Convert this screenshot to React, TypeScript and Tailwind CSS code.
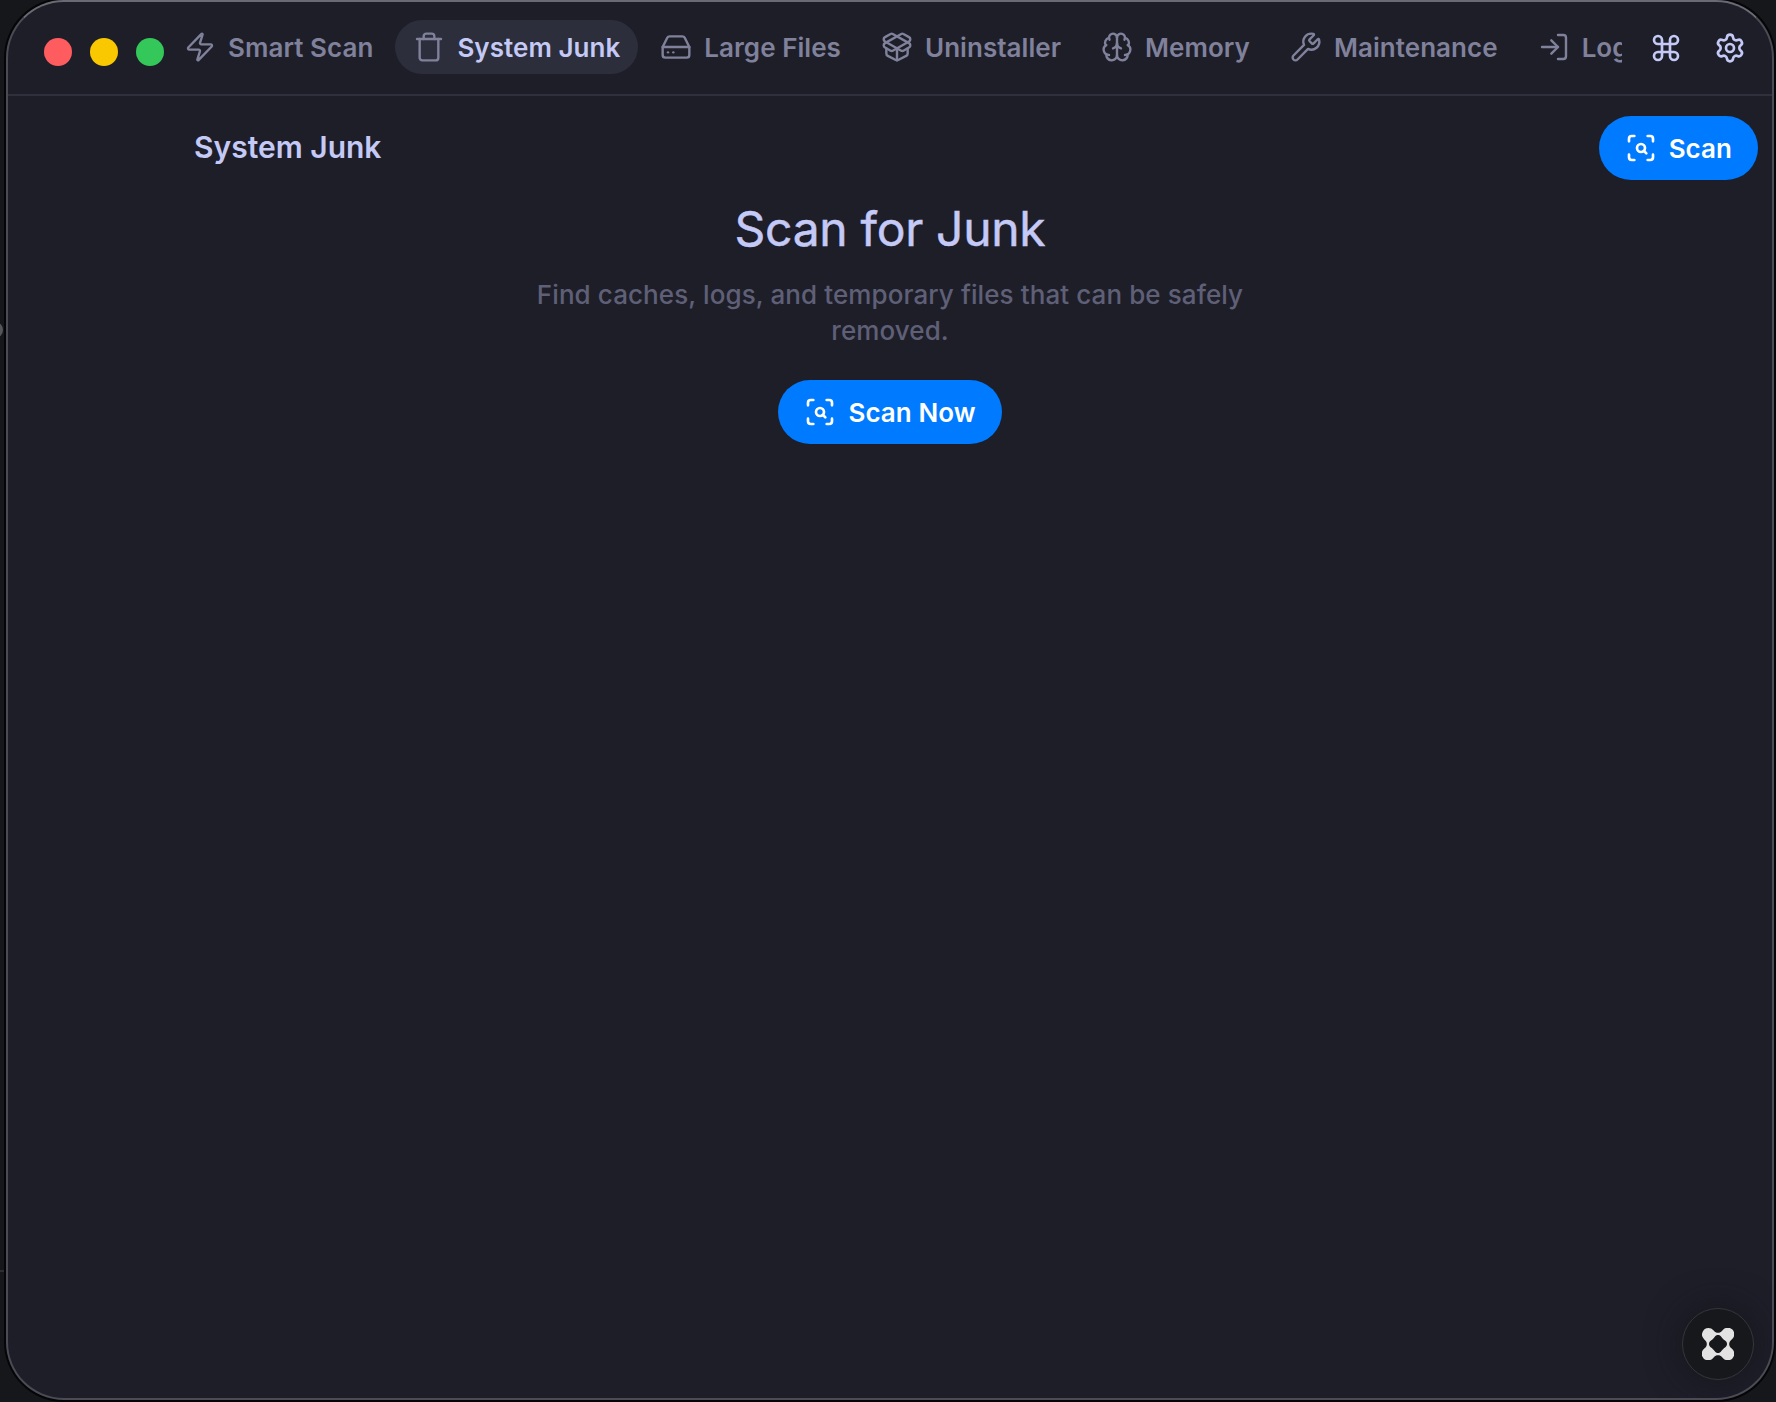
import type { ReactNode } from "react";
import {
  Brain,
  Command,
  HardDrive,
  LogIn,
  PackageOpen,
  ScanSearch,
  Settings,
  Trash,
  Wrench,
  Zap,
  type LucideIcon,
} from "lucide-react";

type Tab = { label: string; icon: LucideIcon; active?: boolean };

const tabs: Tab[] = [
  { label: "Smart Scan", icon: Zap },
  { label: "System Junk", icon: Trash, active: true },
  { label: "Large Files", icon: HardDrive },
  { label: "Uninstaller", icon: PackageOpen },
  { label: "Memory", icon: Brain },
  { label: "Maintenance", icon: Wrench },
  { label: "Login Items", icon: LogIn },
];

function TrafficLights() {
  return (
    <div className="mt-2.5 flex shrink-0 gap-[18px]">
      <span className="size-7 rounded-full bg-[#ff5c60]" />
      <span className="size-7 rounded-full bg-[#fac800]" />
      <span className="size-7 rounded-full bg-[#34c759]" />
    </div>
  );
}

function TabButton({ label, icon: Icon, active }: Tab) {
  return (
    <button
      className={`flex h-[54px] shrink-0 items-center gap-3 rounded-full px-[18px] text-[26px] font-semibold whitespace-nowrap tracking-[0.045px] ${
        active ? "bg-[#2d2e3b] text-[#c4c9f5]" : "text-[#80819b]"
      }`}
    >
      <Icon className="shrink-0 text-[#80819b]" size={32} strokeWidth={1.8} />
      <span>{label}</span>
    </button>
  );
}

function ScanButton({ children }: { children: ReactNode }) {
  return (
    <button className="flex h-16 items-center gap-3 rounded-full bg-[#007aff] px-[26px] text-[26px] font-semibold whitespace-nowrap tracking-[0.05px] text-white">
      <ScanSearch size={32} strokeWidth={2} />
      <span>{children}</span>
    </button>
  );
}

function AssistantButton() {
  return (
    <button
      aria-label="Assistant"
      className="absolute right-[18px] bottom-[18px] flex size-[72px] items-center justify-center rounded-full border border-[#35363d] bg-[#17181b] shadow-[0_0_30px_6px_rgba(20,20,26,0.55)]"
    >
      <svg width="32" height="32" viewBox="0 0 32 32" fill="#e2e2e3">
        <path
          fillRule="evenodd"
          d="M6.5 0A6.5 6.5 0 0 1 11.4 2.3C13 4.3 14.4 4.8 16 4.8C17.6 4.8 19 4.3 20.6 2.3A6.5 6.5 0 1 1 29.7 11.4C27.7 13 27.2 14.4 27.2 16C27.2 17.6 27.7 19 29.7 20.6A6.5 6.5 0 1 1 20.6 29.7C19 27.7 17.6 27.2 16 27.2C14.4 27.2 13 27.7 11.4 29.7A6.5 6.5 0 1 1 2.3 20.6C4.3 19 4.8 17.6 4.8 16C4.8 14.4 4.3 13 2.3 11.4A6.5 6.5 0 0 1 6.5 0ZM16 7C14.6 7 13.6 7.6 12.6 9C11.4 10.6 10.6 11.4 9 12.6C7.6 13.6 7 14.6 7 16C7 17.4 7.6 18.4 9 19.4C10.6 20.6 11.4 21.4 12.6 23C13.6 24.4 14.6 25 16 25C17.4 25 18.4 24.4 19.4 23C20.6 21.4 21.4 20.6 23 19.4C24.4 18.4 25 17.4 25 16C25 14.6 24.4 13.6 23 12.6C21.4 11.4 20.6 10.6 19.4 9C18.4 7.6 17.4 7 16 7Z"
        />
      </svg>
    </button>
  );
}

export default function App() {
  return (
    <div className="relative h-[1402px] w-[1776px] overflow-hidden bg-[#15171a] pr-0.5 pb-0.5 pl-1.5 font-['Inter',sans-serif]">
      <div className="absolute top-[322px] -left-[13px] size-4 rounded-full bg-[#55565a]" />
      <div className="absolute top-[1270px] left-0 h-0.5 w-1.5 bg-[#2c2e31]" />
      <div className="relative flex h-full flex-col overflow-hidden rounded-[58px] border-2 border-t-[#696a74] border-r-[#4a4b54] border-b-[#4a4b54] border-l-[#4a4b54] bg-[#1e1e29] shadow-[0_0_0_2px_#050507]">
        <header className="flex h-[94px] shrink-0 items-center border-b-2 border-[#2f303c] pb-0.5 pl-9">
          <TrafficLights />
          <nav className="ml-0.5 flex w-[1456px] shrink-0 items-center gap-1 overflow-hidden">
            {tabs.map((tab) => (
              <TabButton key={tab.label} {...tab} />
            ))}
          </nav>
          <div className="ml-7 flex shrink-0 gap-8 pt-0.5 text-[#c4c9f5]">
            <Command size={32} strokeWidth={2} />
            <Settings size={32} strokeWidth={2} />
          </div>
        </header>
        <div className="flex h-[104px] shrink-0 items-center justify-between pr-3.5 pl-[186px]">
          <h1 className="pb-0.5 text-[30px] font-semibold text-[#c4c9f5]">System Junk</h1>
          <ScanButton>Scan</ScanButton>
        </div>
        <main className="flex flex-col items-center text-center">
          <h2 className="text-[48px] leading-[58px] tracking-[-0.3px] text-[#c4c9f5] [-webkit-text-stroke:0.5px_#c4c9f5]">
            Scan for Junk
          </h2>
          <p className="mt-[19px] w-[720px] text-[26px] leading-9 font-medium tracking-[0.09px] text-[#5f6077]">
            Find caches, logs, and temporary files that can be safely removed.
          </p>
          <div className="mt-[31px]">
            <ScanButton>Scan Now</ScanButton>
          </div>
        </main>
        <AssistantButton />
      </div>
    </div>
  );
}
